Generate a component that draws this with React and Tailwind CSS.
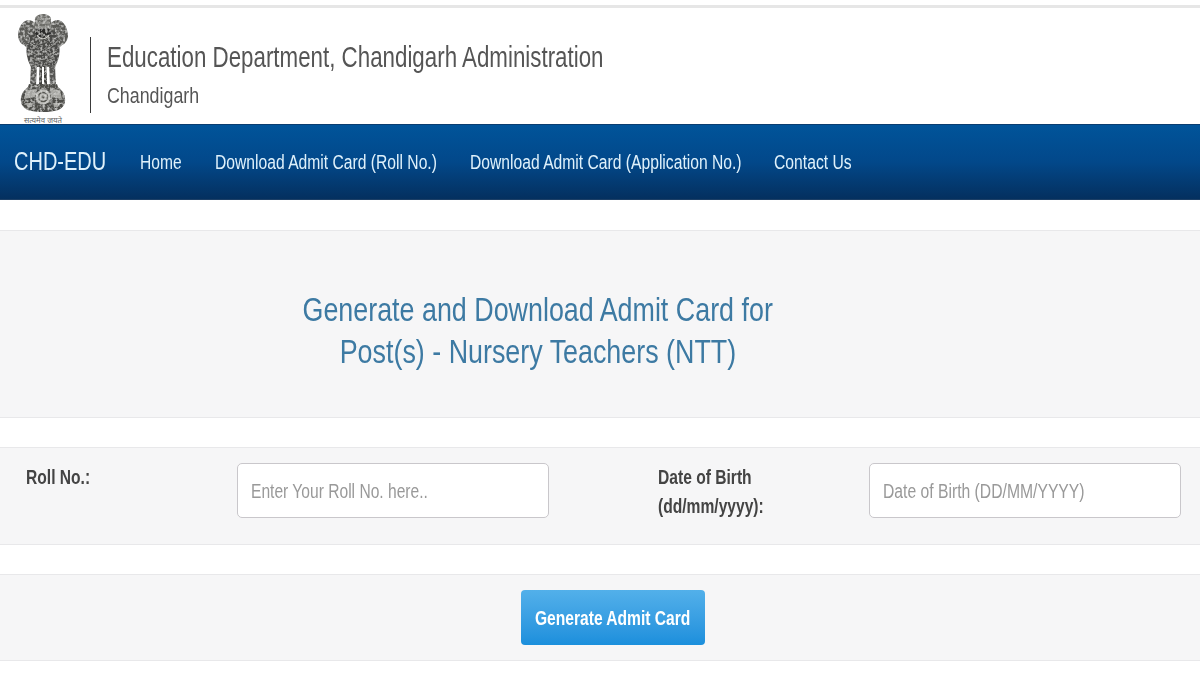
function Sq({ w, className = "", children }) {
  return (
    <span
      className={"inline-block whitespace-nowrap origin-left " + className}
      style={{ width: w }}
    >
      {children}
    </span>
  );
}

function Emblem() {
  return (
    <svg width="50" height="111" viewBox="0 0 50 111" className="block">
      <defs>
        <filter id="mottle" x="-5%" y="-5%" width="110%" height="110%">
          <feTurbulence type="fractalNoise" baseFrequency="0.4" numOctaves="2" seed="4" result="n" />
          <feColorMatrix in="n" type="matrix" values="0 0 0 0 0.78  0 0 0 0 0.78  0 0 0 0 0.76  1.8 0 0 0 -0.8" result="speck" />
          <feComposite in="speck" in2="SourceAlpha" operator="in" result="s" />
          <feMerge result="m">
            <feMergeNode in="SourceGraphic" />
            <feMergeNode in="s" />
          </feMerge>
          <feGaussianBlur in="m" stdDeviation="0.6" />
        </filter>
      </defs>
      <g filter="url(#mottle)">
        {/* side lions */}
        <path d="M0 24 C0 15 4 8 10 7 C15 7 19 11 20 16 L20 34 C14 37 9 36 6 32 C3 31 1 28 0 24Z" fill="#5a5a57" />
        <path d="M50 24 C50 15 46 8 40 7 C35 7 31 11 30 16 L30 34 C36 37 41 36 44 32 C47 31 49 28 50 24Z" fill="#5a5a57" />
        {/* top lion */}
        <path d="M17 8 C16 3 21 1 25 1 C29 1 34 3 33 8 L36 19 L14 19Z" fill="#6c6c68" />
        <path d="M19 6 L31 6 M18 10 L32 10 M17 14 L33 14" stroke="#b3b3af" strokeWidth="0.9" />
        {/* main lion */}
        <path d="M12 19 C16 15 34 15 38 19 L41 32 C43 42 39 50 37 54 L13 54 C11 50 7 42 9 32Z" fill="#494946" />
        <path d="M17 19 C18 29 32 29 33 19 L31 16 L19 16Z" fill="#2a2a29" />
        <path d="M19 22 C22 27 28 27 31 22" stroke="#cfcfcb" strokeWidth="1.2" fill="none" />
        <path d="M12 30 L19 35 M38 30 L31 35 M11 38 L20 42 M39 38 L30 42 M14 45 L22 48 M36 45 L28 48" stroke="#8f8f8b" strokeWidth="1" fill="none" />
        {/* legs */}
        <path d="M13 52 L19 52 L18 72 L12 72Z" fill="#555552" />
        <path d="M21.500 52 L24 52 L24 72 L21 72Z" fill="#3f3f3d" />
        <path d="M26 52 L28.500 52 L29 72 L26 72Z" fill="#3f3f3d" />
        <path d="M31 52 L37 52 L38 72 L32 72Z" fill="#555552" />
        {/* bell */}
        <path d="M11 71 L39 71 L40 74 C46 78 49 86 46 92 C43 97 37 99 25 99 C13 99 7 97 4 92 C1 86 4 78 10 74Z" fill="#4d4d4a" />
        <path d="M8 77 L18 76 L17 84 L6 86Z M32 76 L42 77 L44 86 L33 84Z M7 90 L15 90 L14 94 L10 94Z M35 90 L43 90 L40 94 L36 94Z" fill="#a5a5a1" />
        <circle cx="25" cy="84" r="7.500" fill="#bdbdb9" />
        <circle cx="25" cy="84" r="4.500" fill="none" stroke="#55554f" strokeWidth="1.500" />
        <circle cx="25" cy="84" r="1.500" fill="#55554f" />
      </g>
      <text x="25" y="110" textAnchor="middle" fontSize="7.500" fill="#666" fontFamily="'Noto Sans', 'DejaVu Sans', sans-serif" textLength="38" lengthAdjust="spacingAndGlyphs">सत्यमेव जयते</text>
    </svg>
  );
}

export default function App() {
  return (
    <div className="w-[1200px] h-[675px] overflow-hidden bg-white font-['Liberation_Sans',Arial,sans-serif] text-[20px]">
      <div className="h-[5px]" />
      <div className="h-[3px] bg-[#e6e6e6]" />

      <header className="h-[116px] flex items-start">
        <div className="ml-[18px] mt-[5px] w-[50px]"><Emblem /></div>
        <div className="ml-[22px] mt-[29px] h-[76px] w-px bg-[#3a3a3a]" />
        <div className="ml-[16px] mt-[29px] flex flex-col text-[#555]">
          <Sq w={496} className="text-[29px] leading-[41px] scale-x-[0.77]">Education Department, Chandigarh Administration</Sq>
          <Sq w={92} className="text-[22px] leading-[36px] scale-x-[0.81]">Chandigarh</Sq>
        </div>
      </header>

      <nav className="h-[76px] flex items-center pl-[14px] text-[#dff1fb] bg-gradient-to-b from-[#00549a] via-[#02488a] to-[#04305f] border-t border-[#0a3d70] border-b border-b-[#1c3f66]">
        <Sq w={126} className="text-[25px] scale-x-[0.8]">CHD-EDU</Sq>
        <Sq w={75} className="scale-x-[0.78]">Home</Sq>
        <Sq w={255} className="scale-x-[0.783]">Download Admit Card (Roll No.)</Sq>
        <Sq w={304} className="scale-x-[0.783]">Download Admit Card (Application No.)</Sq>
        <Sq w={78} className="scale-x-[0.785]">Contact Us</Sq>
      </nav>

      <div className="h-[30px]" />

      <section className="h-[188px] bg-[#f6f6f7] border-y border-[#e8e8ea] flex flex-col items-center justify-center pr-[124px] pt-[12px] text-[#3d7aa3] text-[34px] leading-[42px]">
        <span className="block whitespace-nowrap scale-x-[0.79]">Generate and Download Admit Card for</span>
        <span className="block whitespace-nowrap scale-x-[0.79]">Post(s) - Nursery Teachers (NTT)</span>
      </section>

      <div className="h-[29px]" />

      <section className="h-[98px] bg-[#f6f6f7] border-y border-[#e8e8ea] pl-[26px] pt-[15px] grid grid-cols-[211px_421px_211px_312px] items-start text-[#444]">
        <div className="font-bold leading-[29px]"><Sq w={64} className="scale-x-[0.78]">Roll No.:</Sq></div>
        <div className="w-[312px] h-[55px] rounded-[5px] border border-[#c9c7cb] bg-white pl-[13px] flex items-center text-[#999]">
          <Sq w={178} className="scale-x-[0.78]">Enter Your Roll No. here..</Sq>
        </div>
        <div className="font-bold leading-[29px] flex flex-col">
          <Sq w={94} className="scale-x-[0.78]">Date of Birth</Sq>
          <Sq w={106} className="scale-x-[0.78]">(dd/mm/yyyy):</Sq>
        </div>
        <div className="w-[312px] h-[55px] rounded-[5px] border border-[#c9c7cb] bg-white pl-[13px] flex items-center text-[#999]">
          <Sq w={201} className="scale-x-[0.785]">Date of Birth (DD/MM/YYYY)</Sq>
        </div>
      </section>

      <div className="h-[29px]" />

      <section className="h-[87px] bg-[#f6f6f7] border-y border-[#e8e8ea] pl-[26px] pt-[15px] flex justify-center items-start">
        <button className="w-[184px] h-[55px] rounded-[4px] bg-gradient-to-b from-[#52b0ea] to-[#1b8fdc] text-white font-bold flex items-center justify-center">
          <span className="whitespace-nowrap scale-x-[0.78]">Generate Admit Card</span>
        </button>
      </section>
    </div>
  );
}
